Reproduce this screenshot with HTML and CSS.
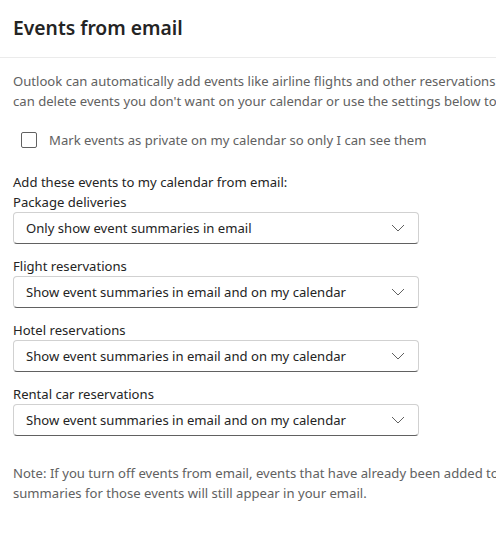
FILE: index.html
```html
<!DOCTYPE html>
<html lang="en">
<head>
<meta charset="utf-8">
<title>Events from email</title>
<link rel="stylesheet" href="styles.css">
</head>
<body>
<div class="pane">
  <header class="header">
    <h1 class="title">Events from email</h1>
  </header>
  <main class="content">
    <p class="intro">Outlook can automatically add events like airline flights and other reservations from your email to your calendar. You<br>can delete events you don't want on your calendar or use the settings below to change what gets added.</p>

    <label class="check-row">
      <span class="checkbox"></span>
      <span class="check-label">Mark events as private on my calendar so only I can see them</span>
    </label>

    <div class="group-title">Add these events to my calendar from email:</div>

    <div class="field">
      <div class="field-label">Package deliveries</div>
      <div class="dropdown">
        <span class="dropdown-text">Only show event summaries in email</span>
        <svg class="chevron" width="14" height="8" viewBox="0 0 14 8"><path d="M1 1 L7 7 L13 1" fill="none" stroke="#616161" stroke-width="1"/></svg>
      </div>
    </div>

    <div class="field">
      <div class="field-label">Flight reservations</div>
      <div class="dropdown">
        <span class="dropdown-text">Show event summaries in email and on my calendar</span>
        <svg class="chevron" width="14" height="8" viewBox="0 0 14 8"><path d="M1 1 L7 7 L13 1" fill="none" stroke="#616161" stroke-width="1"/></svg>
      </div>
    </div>

    <div class="field">
      <div class="field-label">Hotel reservations</div>
      <div class="dropdown">
        <span class="dropdown-text">Show event summaries in email and on my calendar</span>
        <svg class="chevron" width="14" height="8" viewBox="0 0 14 8"><path d="M1 1 L7 7 L13 1" fill="none" stroke="#616161" stroke-width="1"/></svg>
      </div>
    </div>

    <div class="field">
      <div class="field-label">Rental car reservations</div>
      <div class="dropdown">
        <span class="dropdown-text">Show event summaries in email and on my calendar</span>
        <svg class="chevron" width="14" height="8" viewBox="0 0 14 8"><path d="M1 1 L7 7 L13 1" fill="none" stroke="#616161" stroke-width="1"/></svg>
      </div>
    </div>

    <p class="note">Note: If you turn off events from email, events that have already been added to your calendar will be removed. Event<br>summaries for those events will still appear in your email.</p>
  </main>
</div>
</body>
</html>
```

FILE: styles.css
```css
html, body {
  margin: 0;
  padding: 0;
  background: #ffffff;
}

body {
  font-family: "Segoe UI", "Noto Sans", "Open Sans", sans-serif;
  font-size: 13.1px;
  line-height: 20px;
  color: #242424;
  overflow: hidden;
  width: 496px;
  height: 536px;
}

.pane {
  width: 496px;
  overflow: hidden;
}

.header {
  padding: 14px 13px 15px;
  border-bottom: 1px solid #ebebeb;
}

.title {
  margin: 0;
  font-size: 19.3px;
  line-height: 28px;
  font-weight: 600;
  color: #242424;
}

.content {
  padding: 13px 13px 0;
}

.intro, .note {
  margin: 0;
  white-space: nowrap;
  color: #616161;
}

.check-row {
  display: flex;
  align-items: center;
  gap: 12px;
  padding-left: 8px;
  margin-top: 19px;
  height: 20px;
}

.checkbox {
  width: 14px;
  height: 14px;
  border: 1px solid #616161;
  border-radius: 2px;
  flex: none;
}

.check-label {
  color: #616161;
  white-space: nowrap;
}

.group-title {
  margin-top: 22px;
}

.field {
  width: 406px;
}

.field + .field {
  margin-top: 12px;
}

.dropdown {
  display: flex;
  align-items: center;
  justify-content: space-between;
  height: 32px;
  box-sizing: border-box;
  padding: 0 13px 0 12px;
  border: 1px solid #d1d1d1;
  border-bottom-color: #616161;
  border-radius: 4px;
}

.dropdown-text {
  white-space: nowrap;
  color: #242424;
}

.chevron {
  flex: none;
}

.note {
  margin-top: 27px;
}
```
